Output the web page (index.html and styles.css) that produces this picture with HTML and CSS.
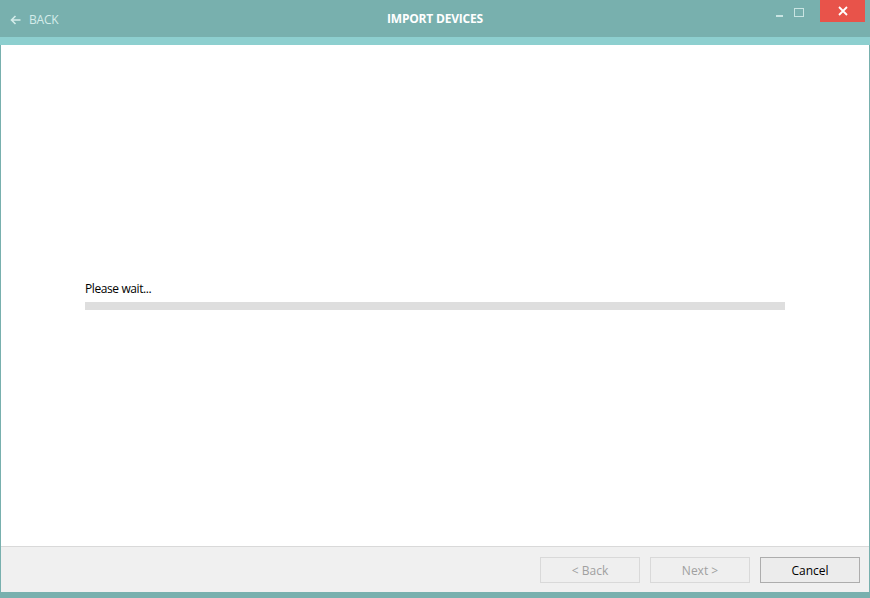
FILE: index.html
```html
<!DOCTYPE html>
<html lang="en">
<head>
    <meta charset="UTF-8">
    <meta name="viewport" content="width=device-width, initial-scale=1.0">
    <title>Import Devices</title>
    <link rel="stylesheet" href="styles.css">
</head>
<body>

    <div class="window">
        <!-- Titulek okna -->
        <div class="titlebar">
            <div class="back-link">
                <svg class="back-arrow" width="11" height="10" viewBox="0 0 11 10">
                    <path d="M10.5 5H1.5M5.5 1L1.5 5L5.5 9" fill="none" stroke="#d4ecea" stroke-width="1.6"/>
                </svg>
                <span>BACK</span>
            </div>
            <div class="title">IMPORT DEVICES</div>
            <div class="controls">
                <span class="ctl-min"></span>
                <span class="ctl-max"></span>
                <span class="ctl-close">
                    <svg width="10" height="10" viewBox="0 0 10 10">
                        <path d="M1 1L9 9M9 1L1 9" stroke="#fff" stroke-width="1.8"/>
                    </svg>
                </span>
            </div>
        </div>
        <div class="stripe"></div>

        <div class="frame">
            <div class="content">
                <div class="progress-box">
                    <div class="status">Please wait...</div>
                    <div class="progress"></div>
                </div>
            </div>

            <div class="footer">
                <button class="btn" disabled>&lt; Back</button>
                <button class="btn" disabled>Next &gt;</button>
                <button class="btn btn-cancel">Cancel</button>
            </div>
        </div>
    </div>

</body>
</html>
```

FILE: styles.css
```css
html, body {
    margin: 0;
    padding: 0;
    height: 100%;
}
body {
    font-family: "Open Sans", "Noto Sans", sans-serif;
    font-size: 12px;
    background-color: white;
    color: black;
}
.window {
    height: 598px;
    display: flex;
    flex-direction: column;
}
.titlebar {
    height: 37px;
    background-color: #78b0ae;
    position: relative;
    display: flex;
    align-items: center;
    justify-content: center;
}
.back-link {
    position: absolute;
    left: 10px;
    top: 11px;
    display: flex;
    align-items: center;
    gap: 8px;
    color: #d4ecea;
    font-size: 12px;
    letter-spacing: -0.2px;
}
.title {
    color: white;
    font-weight: bold;
    font-size: 12px;
    letter-spacing: -0.2px;
    margin-top: -1px;
}
.controls {
    position: absolute;
    right: 5px;
    top: 0;
    display: flex;
    align-items: flex-start;
}
.ctl-min {
    width: 7px;
    height: 2px;
    margin: 15px 11px 0 0;
    background-color: #c9e4e2;
}
.ctl-max {
    width: 8px;
    height: 7px;
    margin: 8px 16px 0 0;
    border: 1px solid #c9e4e2;
}
.ctl-close {
    width: 45px;
    height: 22px;
    display: flex;
    align-items: center;
    justify-content: center;
    background-color: #e8534a;
}
.stripe {
    height: 8px;
    background-color: #8dcfcf;
}
.frame {
    flex: 1;
    display: flex;
    flex-direction: column;
    border-left: 1px solid #78b0ae;
    border-right: 1px solid #78b0ae;
    border-bottom: 6px solid #78b0ae;
}
.content {
    flex: 1;
    display: flex;
    align-items: center;
    justify-content: center;
    background-color: white;
}
.progress-box {
    width: 700px;
}
.status {
    line-height: 16px;
    margin-bottom: 5px;
    letter-spacing: -0.4px;
}
.progress {
    height: 8px;
    background-color: #dedede;
}
.footer {
    height: 46px;
    border-top: 1px solid #d9d9d9;
    background-color: #f0f0f0;
    display: flex;
    justify-content: flex-end;
    align-items: flex-start;
    padding: 10px 9px 0 0;
    box-sizing: border-box;
    gap: 10px;
}
.btn {
    width: 100px;
    height: 26px;
    font-family: "Open Sans", "Noto Sans", sans-serif;
    font-size: 12px;
    background-color: #efefef;
    border: 1px solid #d9d9d9;
    color: #a0a0a0;
    padding: 0;
}
.btn-cancel {
    background-color: #ececec;
    border-color: #adadad;
    color: black;
}
```
